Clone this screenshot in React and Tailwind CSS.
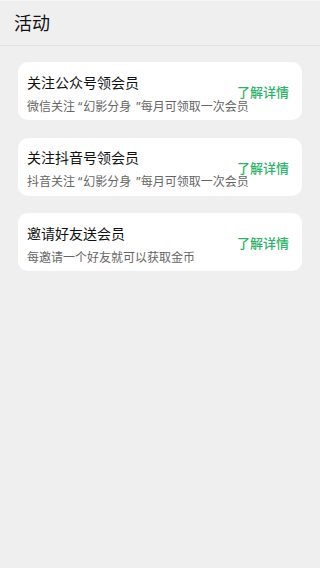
import React from "react";

const items = [
  { title: "关注公众号领会员", pre: "微信关注", name: "幻影分身", post: "每月可领取一次会员" },
  { title: "关注抖音号领会员", pre: "抖音关注", name: "幻影分身", post: "每月可领取一次会员" },
  { title: "邀请好友送会员", pre: "每邀请一个好友就可以获取金币" },
];

export default function App() {
  return (
    <div
      className="w-[320px] h-[568px] bg-[#efefef] overflow-hidden"
      style={{ fontFamily: '"Noto Sans", "Noto Sans CJK SC", sans-serif' }}
    >
      <div className="h-[46px] flex items-center pl-[14px] border-b border-[#e2e2e2] border-t border-t-[#f7f7f7]">
        <span className="text-[18px] text-[#111] leading-none">活动</span>
      </div>
      <div className="flex flex-col gap-[17.5px] px-[18px] pt-[16px]">
        {items.map((it) => (
          <div
            key={it.title}
            className="h-[58px] bg-white rounded-[10px] flex items-center pl-[9px] pr-[16px]"
          >
            <div className="flex flex-col gap-[8px] w-[210px] shrink-0 whitespace-nowrap pt-[5px]">
              <div className="text-[14px] leading-[17px] text-[#111]">{it.title}</div>
              <div className="text-[12px] leading-[15px] text-[#666]">
                {it.pre}
                {it.name && (
                  <>
                    <span className="ml-[3px] mr-[1px]">“</span>
                    {it.name}
                    <span className="ml-[5px]">”</span>
                    {it.post}
                  </>
                )}
              </div>
            </div>
            <div className="ml-auto mt-[3px] text-[13px] font-medium text-[#2db26a] leading-none whitespace-nowrap">了解详情</div>
          </div>
        ))}
      </div>
    </div>
  );
}
